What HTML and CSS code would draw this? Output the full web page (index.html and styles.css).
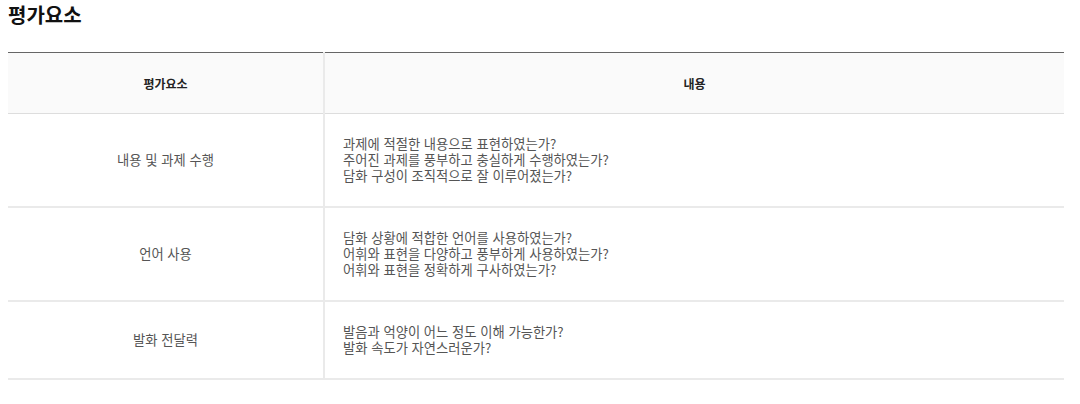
FILE: index.html
```html
<!DOCTYPE html>
<html lang="ko">
<head>
<meta charset="utf-8">
<link rel="stylesheet" href="styles.css">
</head>
<body>
<h2 class="title">평가요소</h2>
<table class="eval">
  <colgroup><col class="c1"><col class="c2"></colgroup>
  <thead>
    <tr><th>평가요소</th><th>내용</th></tr>
  </thead>
  <tbody>
    <tr>
      <td class="name">내용 및 과제 수행</td>
      <td class="desc">과제에 적절한 내용으로 표현하였는가?<br>주어진 과제를 풍부하고 충실하게 수행하였는가?<br>담화 구성이 조직적으로 잘 이루어졌는가?</td>
    </tr>
    <tr>
      <td class="name">언어 사용</td>
      <td class="desc">담화 상황에 적합한 언어를 사용하였는가?<br>어휘와 표현을 다양하고 풍부하게 사용하였는가?<br>어휘와 표현을 정확하게 구사하였는가?</td>
    </tr>
    <tr>
      <td class="name">발화 전달력</td>
      <td class="desc">발음과 억양이 어느 정도 이해 가능한가?<br>발화 속도가 자연스러운가?</td>
    </tr>
  </tbody>
</table>
</body>
</html>
```
FILE: styles.css
```css
html, body {
  margin: 0;
  padding: 0;
  background: #fff;
}
body {
  padding: 0 16px 0 8px;
  font-family: "Noto Sans CJK KR", "Noto Sans", sans-serif;
  color: #555;
}
.title {
  margin: 0;
  padding-top: 1px;
  font-size: 20px;
  line-height: 28px;
  font-weight: 700;
  color: #111;
  height: 51px;
}
.eval {
  width: 1056px;
  border-collapse: collapse;
  border-top: 1px solid #666;
  table-layout: fixed;
}
.c1 { width: 316px; }
.c2 { width: 740px; }
.eval th {
  background: #fafafa;
  height: 60px;
  padding: 0;
  font-size: 12px;
  font-weight: 700;
  color: #222;
  text-align: center;
  border-bottom: 1px solid #ddd;
}
.eval th + th, .eval td + td {
  border-left: 2px solid #eaeaea;
}
.eval td {
  border-bottom: 2px solid #eaeaea;
  font-size: 13.3px;
  line-height: 16px;
  padding: 22px 0;
}
.eval td.name {
  text-align: center;
}
.eval td.desc {
  padding-left: 18px;
}
```
